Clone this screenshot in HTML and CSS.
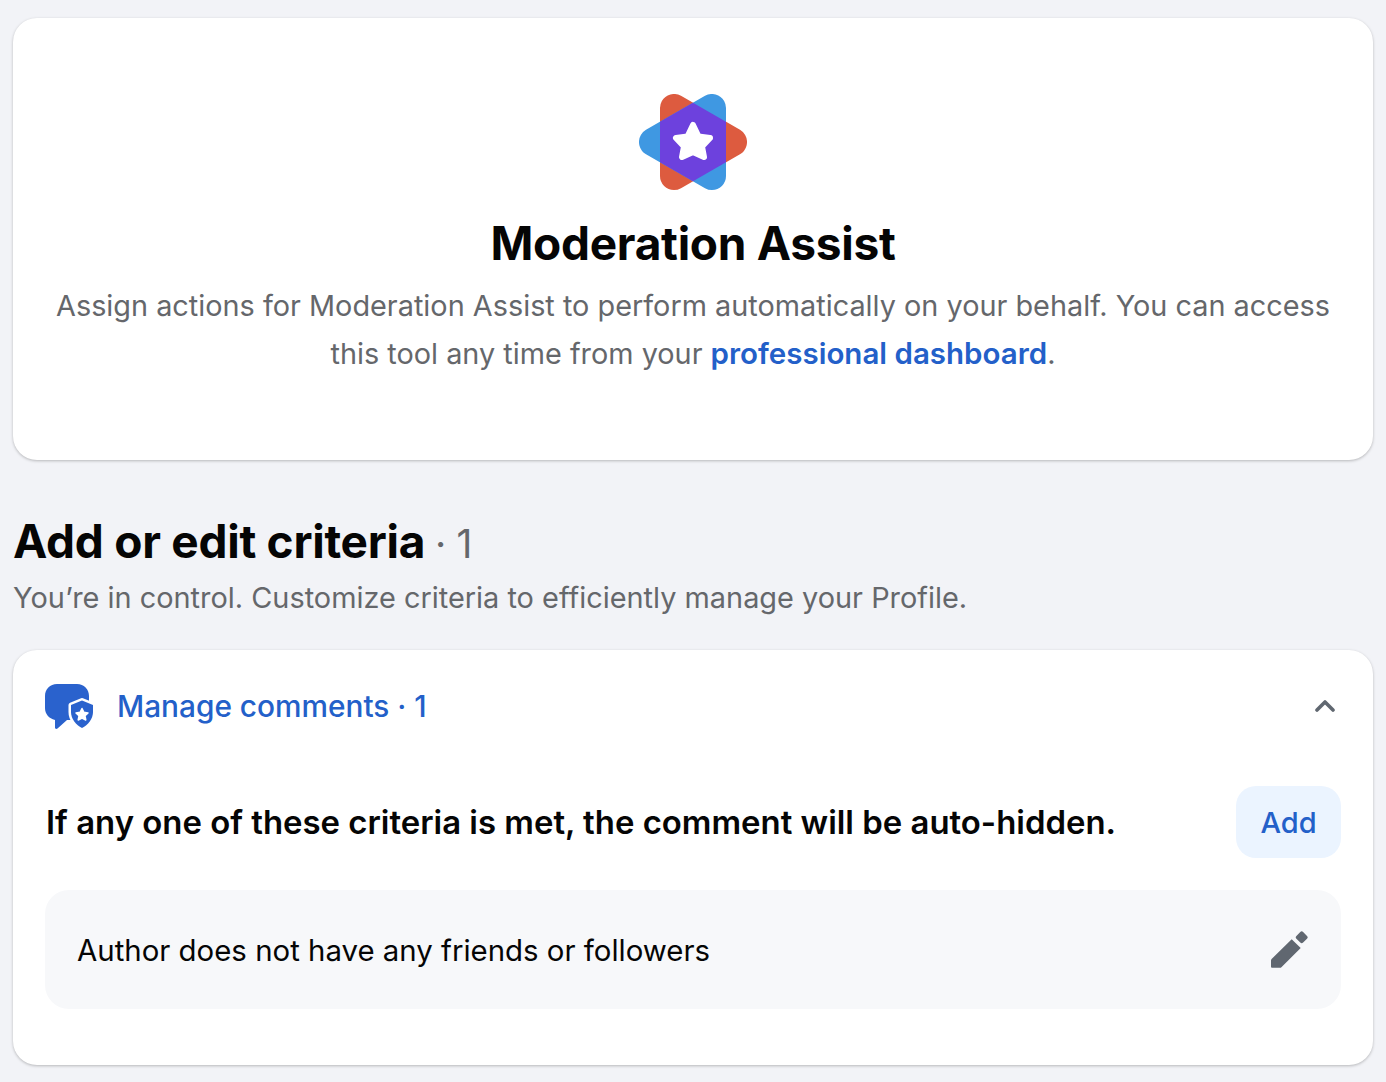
FILE: index.html
```html
<!DOCTYPE html>
<html lang="en">
<head>
    <meta charset="UTF-8">
    <meta name="viewport" content="width=device-width, initial-scale=1.0">
    <title>Moderation Assist</title>
    <link rel="stylesheet" href="styles.css">
</head>
<body>
    <!-- Intro card -->
    <div class="card intro">
        <svg class="logo" width="108" height="96" viewBox="0 0 108 96">
            <polygon fill="#dd5b3f" stroke="#dd5b3f" stroke-width="28" stroke-linejoin="round" points="35,14 35,82 94,48"/>
            <polygon fill="#3f98e2" stroke="#3f98e2" stroke-width="28" stroke-linejoin="round" points="73,14 73,82 14,48"/>
            <polygon fill="#6d41dd" points="54,8.7 87,27.8 87,68.2 54,87.3 21,68.2 21,27.8"/>
            <polygon fill="#fff" stroke="#fff" stroke-width="6" stroke-linejoin="round" points="54,31 59.5,42.5 71,44 63,52.5 65,63 54,58 43,63 45,52.5 37,44 48.5,42.5"/>
        </svg>
        <h1>Moderation Assist</h1>
        <p class="intro-text">Assign actions for Moderation Assist to perform automatically on your behalf. You can access this tool any time from your <a href="#">professional dashboard</a>.</p>
    </div>

    <!-- Criteria heading -->
    <div class="heading">
        <h2>Add or edit criteria <span class="count">· 1</span></h2>
        <p>You’re in control. Customize criteria to efficiently manage your Profile.</p>
    </div>

    <!-- Criteria card -->
    <div class="card criteria">
        <div class="section-head">
            <svg class="section-icon" width="48" height="46" viewBox="0 0 48 46">
                <path fill="#2a62cd" d="M12 0H32C39 0 44 5 44 12V24C44 31 39 36 32 36H22L12.5 44.5C11.5 45.3 10 45 10 43.5V36C4 34.5 0 30 0 24V12C0 5 5 0 12 0z"/>
                <path fill="#2a62cd" stroke="#fff" stroke-width="5" stroke-linejoin="round" d="M37 16.5L48 21V28C48 35 43 41 37 44C31 41 26 35 26 28V21z"/>
                <path fill="#2a62cd" d="M37 16.5L48 21V28C48 35 43 41 37 44C31 41 26 35 26 28V21z"/>
                <polygon fill="#fff" stroke="#fff" stroke-width="1.5" stroke-linejoin="round" points="37,24.5 38.9,28.3 43,28.9 40,31.8 40.8,36 37,34 33.2,36 34,31.8 31,28.9 35.1,28.3"/>
            </svg>
            <span class="section-title">Manage comments · 1</span>
            <svg class="chevron" width="20" height="12" viewBox="0 0 20 12">
                <path fill="none" stroke="#606770" stroke-width="3.6" stroke-linecap="round" stroke-linejoin="round" d="M2 10l8-8 8 8"/>
            </svg>
        </div>
        <div class="rule-row">
            <div class="rule-text">If any one of these criteria is met, the comment will be auto-hidden.</div>
            <button class="add-button">Add</button>
        </div>
        <div class="criterion">
            <span>Author does not have any friends or followers</span>
            <svg class="pencil" width="38" height="38" viewBox="0 0 38 38">
                <path fill="#606770" d="M20.7 8.3L29.7 16.9L10.4 36.2C10 36.6 9.5 36.8 9 36.8H1.3C.5 36.8 0 36.3 0 35.5V29.5C0 29 .2 28.5 .6 28.1z"/>
                <rect fill="#606770" x="25.95" y="1.55" width="9.5" height="9.5" rx="2" transform="rotate(45 30.7 6.3)"/>
            </svg>
        </div>
    </div>
</body>
</html>
```

FILE: styles.css
```css
body {
    font-family: Inter, "Liberation Sans", sans-serif;
    background-color: #f2f3f7;
    margin: 0;
    padding: 18px 13px 16px;
    color: #050505;
}
.card {
    background-color: #fff;
    border-radius: 24px;
    box-shadow: 0 1px 3px rgba(0, 0, 0, 0.25);
}
/* Intro card */
.intro {
    height: 442px;
    box-sizing: border-box;
    padding: 76px 30px 0;
    text-align: center;
}
.logo {
    display: block;
    margin: 0 auto;
}
h1 {
    font-size: 46px;
    line-height: 56px;
    font-weight: 700;
    margin: 25px 0 0;
    letter-spacing: -0.27px;
}
.intro-text {
    font-size: 28.85px;
    line-height: 48px;
    color: #65676b;
    margin: 11px 0 0;
}
.intro-text a {
    color: #2360c9;
    font-size: 29.5px;
    line-height: 1;
    font-weight: 600;
    text-decoration: none;
}
/* Heading above the criteria card */
.heading {
    margin-top: 53px;
}
h2 {
    font-size: 46px;
    line-height: 56px;
    font-weight: 700;
    margin: 0;
    letter-spacing: -0.25px;
}
.count {
    font-size: 39px;
    font-weight: 400;
    color: #65676b;
    margin-left: -1px;
}
.heading p {
    font-size: 28.9px;
    line-height: 40px;
    color: #65676b;
    margin: 6px 0 0;
}
/* Criteria card */
.criteria {
    height: 415px;
    box-sizing: border-box;
    margin-top: 32px;
    padding: 32px 32px 0;
}
.section-head {
    display: flex;
    align-items: center;
    height: 48px;
}
.section-icon {
    margin-top: 2px;
}
.section-title {
    font-size: 29.8px;
    font-weight: 500;
    color: #2360c9;
    margin-left: 24px;
}
.chevron {
    margin-left: auto;
    margin-right: 6px;
}
.rule-row {
    display: flex;
    align-items: center;
    justify-content: space-between;
    margin-top: 56px;
    padding-left: 1px;
}
.rule-text {
    font-size: 32.9px;
    font-weight: 600;
}
.add-button {
    width: 105px;
    height: 72px;
    border: none;
    border-radius: 20px;
    background-color: #ebf4ff;
    color: #2360c9;
    font-family: inherit;
    font-size: 29px;
    font-weight: 500;
}
.criterion {
    display: flex;
    align-items: center;
    justify-content: space-between;
    height: 117px;
    margin-top: 32px;
    padding: 2px 32px 0;
    border-radius: 24px;
    background-color: #f7f8fa;
    font-size: 29.4px;
}
.pencil {
    margin-top: -2px;
}
```
